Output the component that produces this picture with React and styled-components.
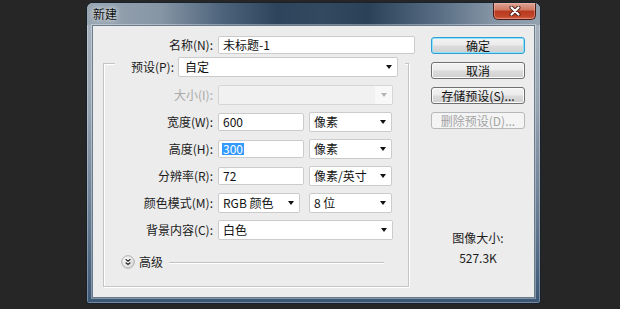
import React from 'react';
import styled, { createGlobalStyle } from 'styled-components';

const GlobalStyle = createGlobalStyle`
  html, body {
    margin: 0;
    padding: 0;
    background: #262626;
  }
  body {
    font-family: "Noto Sans CJK SC", "Liberation Sans", sans-serif;
    font-size: 12px;
    color: #1b1b1b;
  }
  * {
    box-sizing: border-box;
  }
`;

function CloseGlyph() {
    return (
        <svg width="12" height="10" viewBox="0 0 12 10">
            <path d="M2.5 1.5 L9.5 8.5 M9.5 1.5 L2.5 8.5" stroke="#4a1d15" strokeWidth="4" strokeLinecap="round" />
            <path d="M2.5 1.5 L9.5 8.5 M9.5 1.5 L2.5 8.5" stroke="#ffffff" strokeWidth="2.2" strokeLinecap="round" />
        </svg>
    )
}

function ExpandIcon() {
    return (
        <svg width="14" height="14" viewBox="0 0 14 14">
            <defs>
                <radialGradient id="exp" cx="40%" cy="35%" r="70%">
                    <stop offset="0%" stopColor="#ffffff" />
                    <stop offset="100%" stopColor="#d4d4d4" />
                </radialGradient>
            </defs>
            <circle cx="7" cy="7" r="6.3" fill="url(#exp)" stroke="#a9a9a9" strokeWidth="0.9" />
            <path d="M4.6 4.2 L7 6.2 L9.4 4.2 M4.6 7.4 L7 9.4 L9.4 7.4" fill="none" stroke="#2e2e2e" strokeWidth="1.3" />
        </svg>
    )
}

function Dropdown({ value, width, disabled, wide }) {
    return (
        <Select $width={width} $disabled={disabled} $wide={wide}>
            <span>{value}</span>
            <CaretBox $disabled={disabled}><Caret $disabled={disabled} /></CaretBox>
        </Select>
    )
}

function App() {
    return (
        <Page>
            <GlobalStyle />
            <Window>
                <TitleBar>
                    <Title>新建</Title>
                    <CloseButton><CloseGlyph /></CloseButton>
                </TitleBar>
                <Frame>
                    <Client>
                        <MainCol>
                            <NameRow>
                                <Label>名称(N):</Label>
                                <TextBox $width={197}>未标题-1</TextBox>
                            </NameRow>
                            <GroupBox>
                                <GroupHeader>
                                    <HeaderLabel>预设(P):</HeaderLabel>
                                    <Dropdown value="自定" width={220} wide />
                                </GroupHeader>
                                <FormGrid>
                                    <Label $disabled>大小(I):</Label>
                                    <Span2><Dropdown value="" width={175} disabled /></Span2>

                                    <Label>宽度(W):</Label>
                                    <TextBox>600</TextBox>
                                    <Dropdown value="像素" />

                                    <Label>高度(H):</Label>
                                    <TextBox><Selected>300</Selected></TextBox>
                                    <Dropdown value="像素" />

                                    <Label>分辨率(R):</Label>
                                    <TextBox>72</TextBox>
                                    <Dropdown value="像素/英寸" />

                                    <Label>颜色模式(M):</Label>
                                    <Dropdown value="RGB 颜色" width={82} />
                                    <Dropdown value="8 位" />

                                    <Label>背景内容(C):</Label>
                                    <Span2><Dropdown value="白色" width={175} /></Span2>
                                </FormGrid>
                                <AdvancedRow>
                                    <ExpandIcon />
                                    <span>高级</span>
                                    <Rule />
                                </AdvancedRow>
                            </GroupBox>
                        </MainCol>
                        <SideCol>
                            <Button $primary>确定</Button>
                            <Button>取消</Button>
                            <Button>存储预设(S)...</Button>
                            <Button disabled>删除预设(D)...</Button>
                            <ImageSize>
                                <span>图像大小:</span>
                                <span>527.3K</span>
                            </ImageSize>
                        </SideCol>
                    </Client>
                </Frame>
            </Window>
        </Page>
    )
};

const Page = styled.div`
    width: 620px;
    height: 309px;
    padding: 2px 0 0 86px;
    background: #262626;
    overflow: hidden;
`;
const Window = styled.div`
    width: 455px;
    height: 302px;
    display: flex;
    flex-direction: column;
    border: 1px solid #18222d;
    border-radius: 7px 7px 3px 3px;
    overflow: hidden;
    background: linear-gradient(180deg, #a9b4bf 0%, #95a2b0 35%, #62778e 75%, #3b5674 100%);
    box-shadow: inset 0 0 0 1px rgba(255, 255, 255, 0.3);
`;
const TitleBar = styled.div`
    height: 22px;
    display: flex;
    justify-content: space-between;
    align-items: flex-start;
    padding: 0 4px 0 6px;
    background: linear-gradient(90deg, #98a5b2 0%, #8796a5 16%, #4d637b 30%, #2d445c 42%, #33495f 52%, #2a4158 62%, #5a6f85 78%, #8696a6 90%, #93a1af 100%);
`;
const Title = styled.div`
    align-self: center;
    font-size: 12px;
    line-height: 14px;
    color: #101010;
    text-shadow: 0 0 4px rgba(255, 255, 255, 0.9), 0 0 8px rgba(255, 255, 255, 0.5);
`;
const CloseButton = styled.div`
    width: 43px;
    height: 17px;
    display: flex;
    align-items: center;
    justify-content: center;
    border: 1px solid #4b1d16;
    border-top: none;
    border-radius: 0 0 5px 5px;
    background: linear-gradient(180deg, #dea395 0%, #d27a64 42%, #b8391f 52%, #c3472b 85%, #d46a4d 100%);
    box-shadow: inset 0 0 0 1px rgba(255, 210, 200, 0.35);
`;
const Frame = styled.div`
    flex: 1;
    display: flex;
    padding: 0 5px 5px 5px;
`;
const Client = styled.div`
    flex: 1;
    display: flex;
    gap: 16px;
    padding-top: 10px;
    background: #ececec;
    border: 1px solid #6a7b8e;
    box-shadow: 0 0 0 1px rgba(255, 255, 255, 0.35);
`;
const MainCol = styled.div`
    width: 322px;
    display: flex;
    flex-direction: column;
`;
const NameRow = styled.div`
    display: grid;
    grid-template-columns: 120px 197px;
    column-gap: 5px;
    align-items: center;
    height: 18px;
`;
const Label = styled.div`
    text-align: right;
    line-height: 14px;
    white-space: nowrap;
    color: ${p => p.$disabled ? '#a9a9a9' : '#1b1b1b'};
`;
const TextBox = styled.div`
    width: ${p => p.$width || 86}px;
    height: 18px;
    display: flex;
    align-items: center;
    padding-left: 4px;
    background: #ffffff;
    border: 1px solid #cbcbcb;
    border-radius: 2px;
    line-height: 14px;
    white-space: nowrap;
    color: #111;
`;
const Selected = styled.span`
    background: #3399ff;
    color: #ffffff;
    line-height: 12px;
    padding: 0 1px;
    margin-left: -1px;
`;
const GroupBox = styled.div`
    margin: 9px 0 0 10px;
    width: 306px;
    height: 224px;
    border: 1px solid #c4c4c4;
    box-shadow: inset 1px 1px 0 #ffffff, 1px 1px 0 #ffffff;
    display: flex;
    flex-direction: column;
`;
const GroupHeader = styled.div`
    margin: -7px 0 0 11px;
    width: 290px;
    height: 20px;
    display: flex;
    align-items: center;
    gap: 4px;
    padding-right: 7px;
    background: #ececec;
`;
const HeaderLabel = styled(Label)`
    flex: 1;
`;
const Select = styled.div`
    width: ${p => p.$width || 83}px;
    height: 20px;
    display: flex;
    align-items: center;
    justify-content: space-between;
    padding-left: ${p => p.$wide ? 6 : 4}px;
    background: ${p => p.$disabled ? '#f1f1f1' : '#ffffff'};
    border: 1px solid ${p => p.$disabled ? '#d6d6d6' : '#cbcbcb'};
    border-radius: 2px;
    line-height: 14px;
    white-space: nowrap;
    color: #111;
`;
const CaretBox = styled.div`
    width: 17px;
    height: 100%;
    display: flex;
    align-items: center;
    justify-content: center;
    background: ${p => p.$disabled ? '#f8f8f8' : 'transparent'};
`;
const Caret = styled.div`
    width: 0;
    height: 0;
    border-left: 3.5px solid transparent;
    border-right: 3.5px solid transparent;
    border-top: 4px solid ${p => p.$disabled ? '#b5b5b5' : '#111'};
`;
const FormGrid = styled.div`
    margin-top: 8px;
    display: grid;
    grid-template-columns: 109px 86px 83px;
    grid-auto-rows: 20px;
    column-gap: 5px;
    row-gap: 7px;
    align-items: center;
`;
const Span2 = styled.div`
    grid-column: span 2;
`;
const AdvancedRow = styled.div`
    margin: 15px 24px 0 0;
    padding-left: 17px;
    height: 14px;
    display: flex;
    align-items: center;
    gap: 4px;
    line-height: 14px;
`;
const Rule = styled.div`
    flex: 1;
    margin-left: 2px;
    height: 1px;
    background: #c3c3c3;
    box-shadow: 0 1px 0 #ffffff;
`;
const SideCol = styled.div`
    width: 94px;
    display: flex;
    flex-direction: column;
    gap: 8px;
    padding-top: 1px;
`;
const Button = styled.button`
    height: 17px;
    padding: 0;
    font-family: inherit;
    font-size: 12px;
    line-height: 14px;
    color: #111;
    border: 1px solid #707070;
    border-radius: 3px;
    background: linear-gradient(180deg, #f3f3f3 0%, #ebebeb 48%, #dcdcdc 52%, #d0d0d0 100%);
    box-shadow: inset 0 0 0 1px #fafafa;
    ${p => p.$primary && `
        border-color: #2f9fd6;
        box-shadow: inset 0 0 0 1px #8ee2fa;
    `}
    &:disabled {
        color: #a4a4a4;
        border-color: #b5b9bc;
        background: #f4f4f4;
        box-shadow: none;
    }
`;
const ImageSize = styled.div`
    margin-top: 94px;
    display: flex;
    flex-direction: column;
    align-items: center;
    gap: 6px;
    line-height: 14px;
    color: #1b1b1b;
`;

export default App;
